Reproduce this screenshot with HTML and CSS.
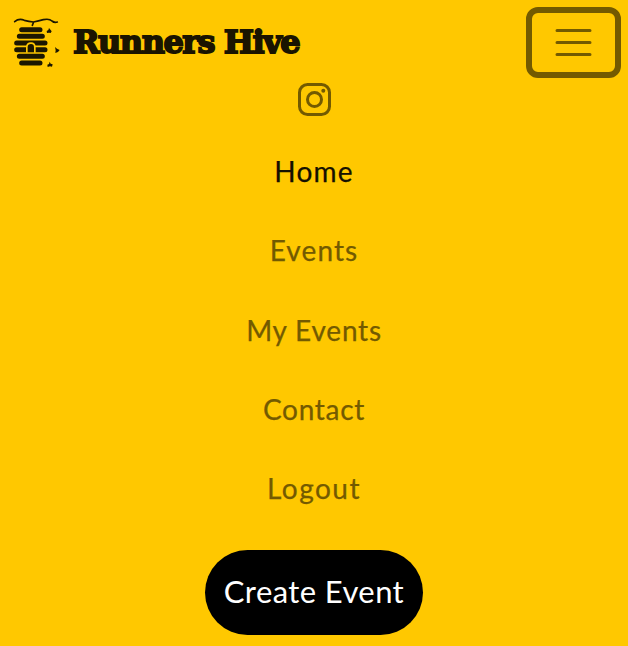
FILE: index.html
```html
<!DOCTYPE html>
<html lang="en">
<head>
<meta charset="utf-8">
<title>Runners Hive</title>
<link rel="stylesheet" href="styles.css">
</head>
<body>
<header class="navbar">
  <a class="brand">
    <svg class="hive" viewBox="36 36 150 156" aria-hidden="true">
      <g fill="none" stroke="#1c1700" stroke-linecap="round">
        <path stroke-width="5" d="M44 50 Q57 39 73 46 Q87 50 100 51 Q116 48 130 44 Q148 40 156 48 Q163 54 172 51 M101 51 L97 61"/>
        <path stroke-width="15" d="M65 74H120M58 94H127M50 114H135M50 134H135M58 154H127M65 174H120"/>
      </g>
      <path fill="#ffc800" d="M78 143V126Q78 112 93 112Q107 112 107 126V143Z"/>
      <path fill="#1c1700" d="M83 142V127Q83 117 93 117Q102 117 102 127V142Z"/>
      <g fill="#1c1700">
        <path d="M147 69l5 6 3 4-3 5-5-1-6 1-1-6 5-3z"/>
        <path d="M165 126l6 5 8 4-5 6-8 3 1-8z"/>
        <path d="M149 170l3 6 6 2-2 7-6-1-7 2-1-7 5-2z"/>
      </g>
    </svg>
    <span class="brand-name">Runners Hive</span>
  </a>
  <button class="toggler" aria-label="Toggle navigation">
    <svg class="bars" viewBox="0 0 30 30"><path d="M4 7h22M4 15h22M4 23h22" fill="none" stroke="#735a00" stroke-width="2" stroke-linecap="round"/></svg>
  </button>
</header>
<nav class="menu">
  <a class="social" aria-label="Instagram">
    <svg class="instagram" viewBox="0 0 33 33" fill="none" stroke="#735a00" stroke-width="3">
      <rect x="1.5" y="1.5" width="30" height="30" rx="8"/>
      <circle cx="16.5" cy="16.5" r="7"/>
      <circle cx="25.3" cy="7.8" r="2" fill="#735a00" stroke="none"/>
    </svg>
  </a>
  <a class="link active">Home</a>
  <a class="link events">Events</a>
  <a class="link my-events">My Events</a>
  <a class="link contact">Contact</a>
  <a class="link logout">Logout</a>
  <a class="create"><span class="create-label">Create Event</span></a>
</nav>
</body>
</html>
```
FILE: styles.css
```css
* { box-sizing: border-box; }
body {
  margin: 0;
  min-height: 646px;
  background: #ffc800;
  font-family: Lato, "Noto Sans", sans-serif;
  overflow: hidden;
}
.navbar {
  height: 83px;
  padding: 7px 7px 0 12px;
  display: flex;
  justify-content: space-between;
  align-items: flex-start;
}
.brand {
  display: flex;
  align-items: center;
  height: 71px;
}
.hive { width: 50px; height: 52px; }
.brand-name {
  margin-left: 11px;
  padding-bottom: 2px;
  font: bold 32px/40px "DejaVu Serif", serif;
  color: #1a1400;
  -webkit-text-stroke: 1.8px #1a1400;
  letter-spacing: -1.5px;
  white-space: nowrap;
}
.toggler {
  width: 95px;
  height: 71px;
  padding: 0;
  border: 6px solid #735a00;
  border-radius: 12px;
  background: none;
  display: flex;
  align-items: center;
  justify-content: center;
}
.bars { width: 45px; height: 45px; }
.menu {
  display: flex;
  flex-direction: column;
  align-items: center;
}
.social { height: 49px; }
.instagram { width: 33px; height: 33px; display: block; }
.link {
  height: 79.25px;
  font-size: 28px;
  line-height: 79.25px;
  color: #735a00;
  -webkit-text-stroke: 0.25px currentColor;
  white-space: nowrap;
}
.active { color: #151000; letter-spacing: 1.2px; }
.events { letter-spacing: 1.1px; }
.my-events { letter-spacing: 0.8px; }
.contact { letter-spacing: 0.7px; }
.logout { letter-spacing: 1.5px; }
.create {
  margin-top: 22px;
  width: 218px;
  height: 85px;
  border-radius: 43px;
  background: #000;
  color: #fff;
  font-size: 31px;
  line-height: 83px;
  letter-spacing: 0.4px;
  text-align: center;
  white-space: nowrap;
}
```
